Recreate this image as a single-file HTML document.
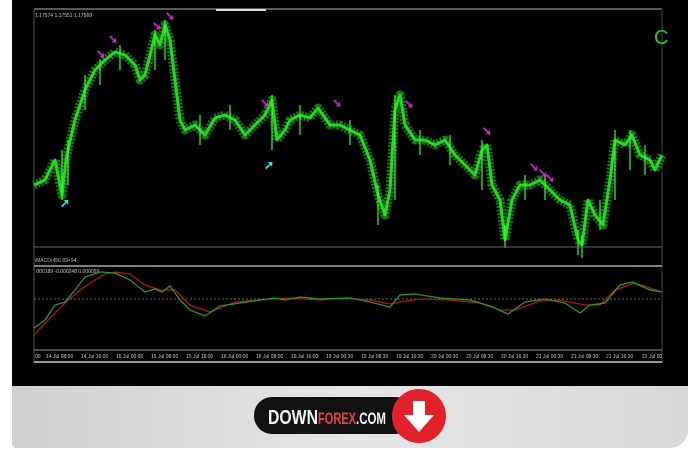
<!DOCTYPE html>
<html><head><style>
body{margin:0;width:700px;height:450px;background:#fff;overflow:hidden;position:relative;font-family:"Liberation Sans",sans-serif}
.mon{position:absolute;left:12px;top:0;width:676px;height:386px;background:#000}
.bez{position:absolute;left:12px;top:386px;width:676px;height:62px;background:linear-gradient(90deg,#cfcfd1,#e6e6e8 50%,#d8d8da);border-radius:0 0 18px 4px}
</style></head><body>
<div class="mon"></div>
<div class="bez"></div>
<svg width="700" height="450" style="position:absolute;left:0;top:0">
<line x1="34" y1="9" x2="662" y2="9" stroke="#777" stroke-width="1.5"/>
<line x1="216" y1="10" x2="266" y2="10" stroke="#ddd" stroke-width="2"/>
<line x1="34" y1="10" x2="34" y2="362" stroke="#555"/>
<line x1="662" y1="10" x2="662" y2="362" stroke="#444"/>
<text x="35" y="17" fill="#ccc" font-size="5">1.17574 1.17551 1.17568</text>
<text x="654" y="44" fill="#2c2" font-size="20">C</text>
<defs><polyline id="p" points="34,185 45,180 50,170 55,160 62,195 66,160 68,150 75,120 80,105 85,90 90,80 95,70 105,60 115,52 125,55 135,65 140,80 145,75 150,55 155,35 160,45 165,25 170,40 175,80 180,120 185,130 195,125 205,135 215,118 225,115 235,120 245,135 255,125 265,115 272,100 277,140 285,130 290,120 300,115 310,118 318,108 330,125 340,125 350,130 360,135 370,160 378,195 385,215 390,190 395,110 400,95 405,125 415,140 425,140 435,145 445,140 455,155 465,165 475,175 482,150 487,145 492,185 500,200 505,240 512,200 520,185 530,185 540,180 550,190 560,200 570,205 578,240 582,245 588,200 595,215 603,225 610,180 615,140 625,145 632,135 640,155 650,160 655,170 662,155"/></defs>
<use href="#p" fill="none" stroke="#0d7a0d" stroke-width="9" stroke-linejoin="round" stroke-dasharray="2,1.5"/>
<use href="#p" fill="none" stroke="#2bd426" stroke-width="3" stroke-linejoin="round"/>
<g stroke="#3f3" stroke-width="1.2">
<path d="M62 150V200M68 140V185M85 75V110M155 30V70M165 20V60M272 95V150M378 185V225M395 95V200M482 140V190M505 225V248M578 230V255M582 235V258M615 130V200M630 130V170M100 60V85M120 45V70M200 115V145M230 105V130M300 105V135M350 120V145M420 130V155M450 135V165M525 175V200M545 175V200M600 200V230M645 145V175"/>
</g>
<g fill="#e01ee0" font-size="12" font-weight="bold">
<text x="96" y="58">➘</text><text x="108" y="43">➘</text><text x="152" y="30">➘</text><text x="165" y="20">➘</text>
<text x="260" y="107">➘</text><text x="332" y="107">➘</text><text x="404" y="108">➘</text><text x="482" y="135">➘</text>
<text x="529" y="171">➘</text><text x="538" y="177">➘</text><text x="545" y="182">➘</text>
</g>
<g fill="#2ee" font-size="12" font-weight="bold"><text x="60" y="207">➚</text><text x="264" y="169">➚</text></g>
<line x1="34" y1="247" x2="662" y2="247" stroke="#666"/>
<text x="35" y="262" fill="#bbb" font-size="5">iMACD(456 89+94</text>
<line x1="34" y1="266" x2="662" y2="266" stroke="#aaa" stroke-width="1.5"/>
<text x="35" y="273" fill="#ccc" font-size="5">.000189 -0.000248 0.000059</text>
<line x1="34" y1="299" x2="662" y2="299" stroke="#888" stroke-dasharray="2,2" stroke-width=".7"/>
<polyline fill="none" stroke="#b01818" stroke-width="1.3" points="34,335 50,318 65,303 80,290 95,280 105,274 115,272 130,274 145,285 160,290 175,290 190,305 210,312 235,302 260,300 290,298 320,300 345,298 370,300 390,304 400,302 420,299 450,300 480,303 500,310 515,310 540,301 560,300 585,305 600,305 615,290 635,283 662,292"/>
<polyline fill="none" stroke="#2a9a2a" stroke-width="1.3" points="34,328 45,320 55,305 65,302 75,290 85,277 100,272 115,273 130,280 145,292 155,289 162,292 170,286 180,300 190,310 205,316 220,306 240,303 260,300 275,298 285,300 300,297 320,299 350,298 370,302 390,307 400,295 415,294 440,298 470,300 490,306 508,314 525,302 545,299 565,303 580,313 590,305 605,303 620,285 632,282 650,290 662,292"/>
<line x1="34" y1="350" x2="662" y2="350" stroke="#999"/>
<g fill="#ccc" font-size="5">
<text x="35" y="358">00</text><text x="46" y="358">14 Jul 08:00</text><text x="81" y="358">14 Jul 16:00</text><text x="116" y="358">15 Jul 00:00</text><text x="151" y="358">15 Jul 08:00</text><text x="186" y="358">15 Jul 16:00</text><text x="221" y="358">16 Jul 00:00</text><text x="256" y="358">16 Jul 08:00</text><text x="291" y="358">16 Jul 16:00</text><text x="326" y="358">19 Jul 00:30</text><text x="361" y="358">19 Jul 08:30</text><text x="396" y="358">19 Jul 16:30</text><text x="431" y="358">20 Jul 00:30</text><text x="466" y="358">20 Jul 08:30</text><text x="501" y="358">20 Jul 16:30</text><text x="536" y="358">21 Jul 00:30</text><text x="571" y="358">21 Jul 08:30</text><text x="606" y="358">21 Jul 16:30</text><text x="642" y="358">22 Jul 00</text>
</g>
<line x1="34" y1="362" x2="662" y2="362" stroke="#ccc" stroke-width="1.5"/>
<rect x="254" y="397" width="160" height="37" rx="18" fill="#111"/>
<text x="268" y="424" fill="#f4f4f4" font-size="20" font-weight="bold" textLength="50" lengthAdjust="spacingAndGlyphs">DOWN</text>
<text x="318" y="424" fill="#e8434b" font-size="17" font-weight="bold" textLength="38" lengthAdjust="spacingAndGlyphs">FOREX</text>
<text x="356" y="424" fill="#f4f4f4" font-size="17" font-weight="bold" textLength="30" lengthAdjust="spacingAndGlyphs">.COM</text>
<circle cx="419" cy="416" r="27" fill="#e2222a"/>
<path d="M413 401h12v14h9l-15 17-15-17h9z" fill="#fff"/>
</svg>
</body></html>
